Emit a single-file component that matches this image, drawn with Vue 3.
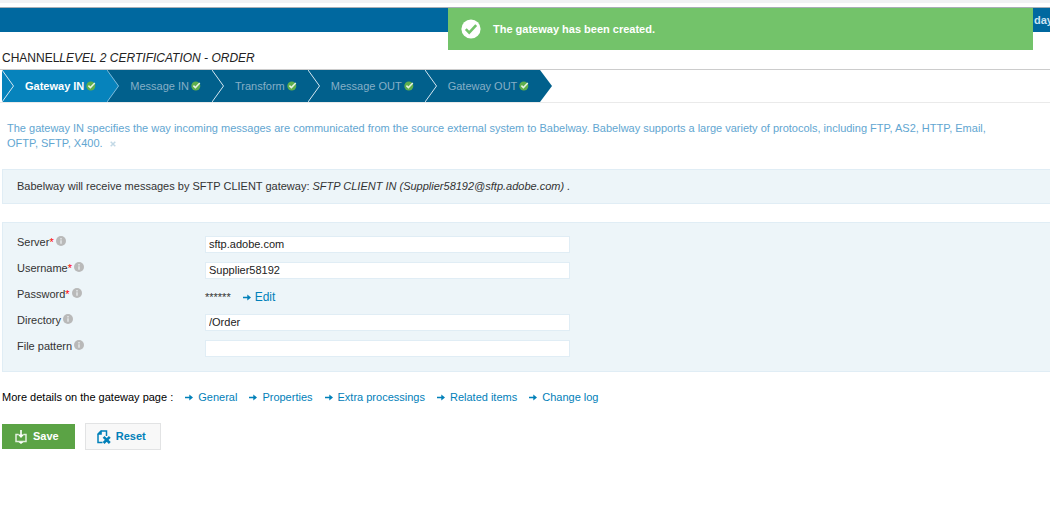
<script setup>
import { reactive } from 'vue'

const steps = [
  { label: 'Gateway IN', active: true },
  { label: 'Message IN' },
  { label: 'Transform' },
  { label: 'Message OUT' },
  { label: 'Gateway OUT' },
]

const fields = reactive([
  { id: 'server', label: 'Server', required: true, value: 'sftp.adobe.com' },
  { id: 'username', label: 'Username', required: true, value: 'Supplier58192' },
  { id: 'password', label: 'Password', required: true, secret: true },
  { id: 'directory', label: 'Directory', value: '/Order' },
  { id: 'pattern', label: 'File pattern', value: '' },
])

const links = ['General', 'Properties', 'Extra processings', 'Related items', 'Change log']
</script>

<template>
  <div class="page">
    <div class="strip"></div>
    <header class="bar"><span class="bar-text">day</span></header>
    <div class="toast" role="status">
      <svg class="toast-icon" viewBox="0 0 20 20" aria-hidden="true">
        <circle cx="10" cy="10" r="9.6" fill="#fff" />
        <path d="M4.800 10.200l3.400 3.400L15.200 6.200" fill="none" stroke="#73c36a" stroke-width="2.600" />
      </svg>
      <span>The gateway has been created.</span>
    </div>

    <h1 class="title">CHANNEL<em>LEVEL 2 CERTIFICATION - ORDER</em></h1>

    <nav class="steps">
      <a v-for="(s, i) in steps" :key="s.label" href="#" class="step" :class="{ active: s.active }">
        <svg class="chevron" viewBox="0 0 12 32" aria-hidden="true">
          <path v-if="i < 2" d="M0 0L12 16L0 32Z" fill="#0683bc" />
          <path d="M0 0L11.5 16L0 32" fill="none" :stroke="i === 1 ? '#7fb9d8' : '#d5e7f1'" stroke-width="1" />
        </svg>
        <span class="step-label">{{ s.label }}</span>
        <svg class="tick" viewBox="0 0 10 10" aria-hidden="true">
          <circle cx="4.8" cy="5" r="4.500" fill="#5eae4d" />
          <path d="M2.400 4.600l2 2L8.800 2" fill="none" stroke="#e6f3e2" stroke-width="1.500" />
        </svg>
      </a>
      <svg class="tip" viewBox="0 0 12 32" aria-hidden="true"><path d="M0 0L12 16L0 32Z" fill="#01608c" /></svg>
    </nav>

    <p class="hint">
      The gateway IN specifies the way incoming messages are communicated from the source external system to Babelway. Babelway supports a large variety of protocols, including FTP, AS2, HTTP, Email, OFTP, SFTP, X400.
      <button type="button" class="close" aria-label="Close">
        <svg viewBox="0 0 6 6"><path d="M.7 .7L5.3 5.3M5.3 .7L.7 5.3" stroke="#c3d9e6" stroke-width="1.5" /></svg>
      </button>
    </p>

    <section class="panel summary">
      Babelway will receive messages by SFTP CLIENT gateway: <em>SFTP CLIENT IN (Supplier58192@sftp.adobe.com) .</em>
    </section>

    <form @submit.prevent>
      <section class="panel fields">
        <div v-for="f in fields" :key="f.id" class="row">
          <div class="name">
            <label :for="f.id">{{ f.label }}<span v-if="f.required" class="req">*</span></label>
            <svg class="info" viewBox="0 0 10 10" aria-hidden="true">
              <circle cx="5" cy="5" r="5" fill="#b9b9b9" />
              <path d="M5 2v1.4M5 4.2v3.6" stroke="#e3e6e8" stroke-width="1.5" />
            </svg>
          </div>
          <div v-if="f.secret" class="secret">
            <output :id="f.id">******</output>
            <a href="#" class="link edit">
              <svg class="arrow" viewBox="0 0 8 7" aria-hidden="true"><path d="M0 2.700h4.300V.400L8 3.500 4.300 6.600V4.300H0z" fill="#0180b9" /></svg>Edit
            </a>
          </div>
          <input v-else :id="f.id" v-model="f.value" type="text" />
        </div>
      </section>

      <div class="more">
        <span class="more-label">More details on the gateway page :</span>
        <a v-for="l in links" :key="l" href="#" class="link">
          <svg class="arrow" viewBox="0 0 8 7" aria-hidden="true"><path d="M0 2.700h4.300V.400L8 3.500 4.300 6.600V4.300H0z" fill="#0180b9" /></svg>{{ l }}
        </a>
      </div>

      <div class="actions">
        <button type="submit" class="save">
          <svg class="save-icon" viewBox="0 0 12 14" aria-hidden="true">
            <path d="M3.500 4.500H1v7h10v-7H8.500" fill="none" stroke="#e3f1df" stroke-width="1.500" />
            <path d="M5.200 0h1.600v4.500h2.400L6 8 2.800 4.500h2.400zM3.500 12h5L6 14z" fill="#fff" />
          </svg>
          Save
        </button>
        <button type="reset" class="reset">
          <svg class="reset-icon" viewBox="0 0 14 14" aria-hidden="true">
            <path d="M5.500 12.500H1V4L4 1H9.500V6" fill="none" stroke="#0180b9" stroke-width="1.500" />
            <path d="M.3 4.800L4.800 .3V4.800z" fill="#0180b9" />
            <path d="M6.600 6.800l6.200 6.200M12.800 6.800l-6.200 6.200" stroke="#0180b9" stroke-width="2.600" />
          </svg>
          Reset
        </button>
      </div>
    </form>
  </div>
</template>

<style>
body {
  background: #fff;
  overflow-x: hidden;
}
</style>

<style scoped>
.page {
  position: relative;
  font: 11px/15px "Liberation Sans", Arial, sans-serif;
  color: #333;
}
.strip {
  height: 3px;
  margin-bottom: 4px;
  background: #f1f2f4;
}
.bar {
  display: flex;
  justify-content: flex-end;
  height: 24px;
  border-top: 1px solid #a9afb6;
  background: #00689f;
  overflow: hidden;
}
.bar-text {
  margin-right: -3px;
  font: bold 11px/24px "Liberation Sans", Arial, sans-serif;
  color: #cce4f2;
}
.toast {
  position: absolute;
  top: 8px;
  right: 17px;
  left: 448px;
  display: flex;
  align-items: center;
  gap: 12px;
  height: 42px;
  padding-left: 13px;
  box-sizing: border-box;
  background: #73c36a;
  color: #fff;
  font-weight: bold;
}
.toast-icon {
  width: 20px;
  height: 20px;
}
.title {
  margin: 18px 0 3px 2px;
  font-size: 12px;
  line-height: 16px;
  font-weight: normal;
  color: #222;
}
.steps {
  display: flex;
  height: 32px;
  padding-left: 2px;
  border-top: 1px solid #ccc;
  border-bottom: 1px solid #eaeaea;
}
.step {
  display: flex;
  align-items: center;
  padding-right: 11px;
  background: #01608c;
  color: #86afc7;
  text-decoration: none;
}
.step.active {
  background: #0683bc;
  color: #fff;
  font-weight: bold;
}
.chevron,
.tip {
  width: 12px;
  height: 32px;
}
.step-label {
  margin: 0 2px 0 11px;
}
.tick {
  width: 10px;
  height: 10px;
}
.hint {
  max-width: 980px;
  margin: 18px 7px;
  color: #62a6d1;
}
.close {
  width: 6px;
  height: 6px;
  margin-left: 4px;
  padding: 0;
  border: 0;
  background: none;
}
.close svg {
  display: block;
}
.panel {
  margin-left: 2px;
  border: 1px solid #e0edf5;
  border-right: 0;
  background: #edf5f9;
}
.summary {
  margin-bottom: 18px;
  padding: 9px 14px;
}
.fields {
  padding: 13px 14px 5px;
}
.row {
  display: grid;
  grid-template-columns: 188px minmax(0, 365px);
  height: 26px;
}
.name {
  display: flex;
  align-items: center;
  gap: 2px;
  height: 13px;
}
.req {
  color: #f00;
}
.info {
  width: 10px;
  height: 10px;
  margin-bottom: 3px;
}
.row input {
  height: 17px;
  padding: 0 3px 2px;
  box-sizing: border-box;
  border: 1px solid #e0edf5;
  border-radius: 0;
  background: #fff;
  font: inherit;
  line-height: 13px;
  color: #222;
}
.secret {
  display: flex;
  align-items: center;
  gap: 12px;
  height: 19px;
}
.link {
  display: flex;
  align-items: center;
  gap: 5px;
  color: #0180b9;
  text-decoration: none;
}
.edit {
  gap: 4px;
  font-size: 12px;
}
.arrow {
  width: 8px;
  height: 7px;
}
.more {
  display: flex;
  gap: 12px;
  margin: 18px 2px;
  color: #000;
}
.actions {
  display: flex;
  align-items: center;
  gap: 10px;
  padding-left: 2px;
}
.actions button {
  display: flex;
  align-items: center;
  box-sizing: border-box;
  font: bold 11px/15px "Liberation Sans", Arial, sans-serif;
}
.save {
  gap: 6px;
  height: 25px;
  padding: 0 16px 0 13px;
  border: 0;
  background: #5ba345;
  color: #fff;
}
.save-icon {
  width: 12px;
  height: 14px;
}
.reset {
  gap: 5px;
  height: 27px;
  padding: 0 14px 0 11px;
  border: 1px solid #e2e3e4;
  background: #f8f8f8;
  color: #0180b9;
}
.reset-icon {
  width: 14px;
  height: 14px;
}
</style>
